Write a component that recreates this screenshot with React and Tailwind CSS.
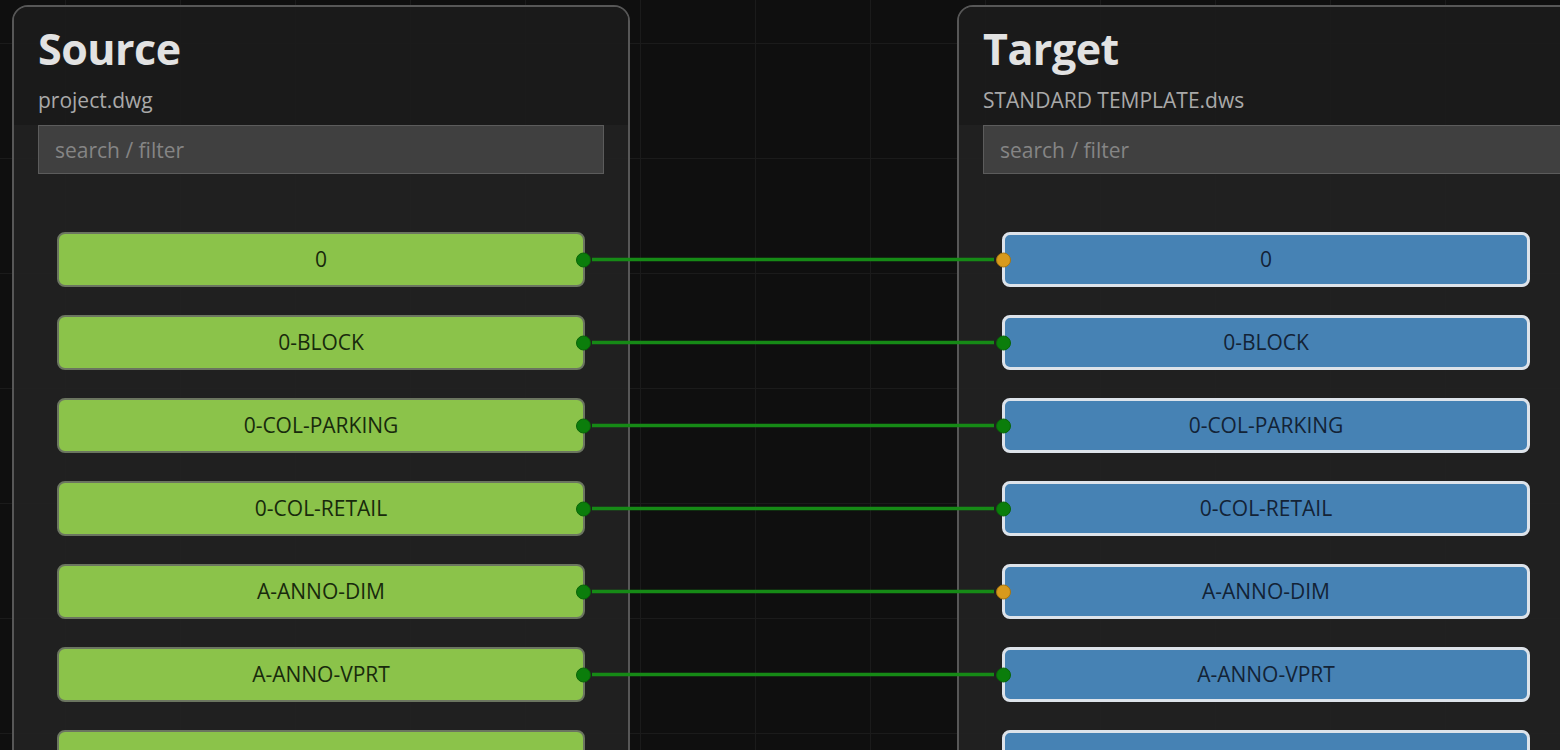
import React from 'react';

// last row is only peeking in at the bottom edge; its label is below the fold
const layers = [
  { id: 1, name: '0', target: 'warn' },
  { id: 2, name: '0-BLOCK', target: 'ok' },
  { id: 3, name: '0-COL-PARKING', target: 'ok' },
  { id: 4, name: '0-COL-RETAIL', target: 'ok' },
  { id: 5, name: 'A-ANNO-DIM', target: 'warn' },
  { id: 6, name: 'A-ANNO-VPRT', target: 'ok' },
  { id: 7, name: '', target: 'ok' },
];

const ROW_TOP = 232;
const ROW_STEP = 83;
const ROW_H = 55;

const Dot = ({ side, warn }) => (
  <span
    className={
      'absolute top-1/2 -translate-y-1/2 w-[15px] h-[15px] rounded-full border ' +
      (side === 'right' ? 'right-[-8px] ' : 'left-[-9px] ') +
      (warn ? 'bg-[#d89a1c] border-[#a8760f]' : 'bg-[#0b7d0b] border-[#086508]')
    }
  />
);

const Panel = ({ title, file, width, children }) => (
  <div
    className={`${width} h-[800px] shrink-0 rounded-2xl border-2 border-[#575757] overflow-hidden flex flex-col`}
  >
    <div className="bg-[#1b1b1b]/95 px-[24px] pt-[16px] pb-0">
      <h2 className="text-[43px] leading-[52px] font-bold text-[#e2e2e2] tracking-[-0.5px]">{title}</h2>
      <div className="text-[21px] leading-[28px] text-[#a9a9a9] mt-[11px] mb-[11px]">{file}</div>
    </div>
    <div className="flex-1 bg-[#222222]/90 px-[24px]">
      <div className="h-[49px] bg-[#444444]/90 border border-[#5c5c5c] flex items-center px-[16px] pt-[3px] text-[21px] text-[#858585]">
        search / filter
      </div>
      <div className="flex flex-col gap-[28px] pt-[58px] pl-[19px]">{children}</div>
    </div>
  </div>
);

export default function App() {
  return (
    <div
      className="relative w-[1560px] h-[750px] overflow-hidden bg-[#0f0f0f] bg-[linear-gradient(to_right,#1b1b1b_1px,transparent_1px),linear-gradient(to_bottom,#1b1b1b_1px,transparent_1px)] bg-[size:115px_115px] bg-[position:65px_43px]"
      style={{ fontFamily: '"Open Sans", "Noto Sans", sans-serif' }}
    >
      <div className="flex pl-[12px] pt-[5px] gap-[327px]">
        <Panel title="Source" file="project.dwg" width="w-[618px]">
          {layers.map((l) => (
            <div
              key={l.id}
              className="relative w-[528px] h-[55px] rounded-lg border-2 border-[#6b7560] bg-[#8bc34a] flex items-center justify-center text-[21px] font-medium text-[#182a0c]"
            >
              {l.name}
              <Dot side="right" />
            </div>
          ))}
        </Panel>
        <Panel title="Target" file="STANDARD TEMPLATE.dws" width="w-[680px]">
          {layers.map((l) => (
            <div
              key={l.id}
              className="relative w-[528px] h-[55px] rounded-lg border-[3px] border-[#dde3ea] bg-[#4682b4] flex items-center justify-center text-[21px] font-medium text-[#132336]"
            >
              {l.name}
              <Dot side="left" warn={l.target === 'warn'} />
            </div>
          ))}
        </Panel>
      </div>

      <svg className="absolute inset-0 pointer-events-none" width="1560" height="750">
        {layers.map((l, i) => {
          const y = ROW_TOP + ROW_H / 2 + i * ROW_STEP;
          return <line key={l.id} x1="592" y1={y} x2="994" y2={y} stroke="#168a16" strokeWidth="3.5" />;
        })}
      </svg>
    </div>
  );
}
